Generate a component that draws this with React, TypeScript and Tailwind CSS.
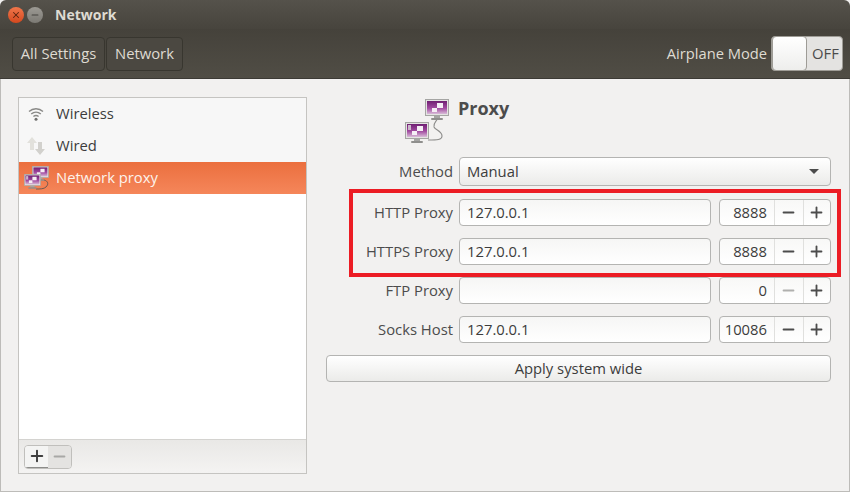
import { Minus, Plus, X } from "lucide-react";

const font = "font-['Open_Sans','Noto_Sans',sans-serif]";

function Screen({ x, y, id, dots, scale = 1 }: { x: number; y: number; id: string; dots?: boolean; scale?: number }) {
  return (
    <g transform={`translate(${x} ${y}) scale(${scale})`}>
      <rect x="0.5" y="0.5" width="23" height="16" fill="#e4e4e2" stroke="#a5a5a3" />
      <rect x="2" y="2" width="20" height="13" fill={`url(#${id})`} />
      <rect x="12" y="4" width="6" height="5" fill="#f5eef5" />
      <rect x="7" y="9" width="5" height="4" fill="#f5eef5" />
      {dots && <rect x="3" y="3" width="3" height="5" fill="#cbb8cb" />}
      <rect x="9" y="17" width="6" height="2" fill="#a5a5a3" />
      <rect x="6" y="19" width="12" height="2" rx="1" fill="#8f8f8d" />
    </g>
  );
}

function Grad({ id }: { id: string }) {
  return (
    <defs>
      <linearGradient id={id} x1="0" y1="0" x2="0" y2="1">
        <stop offset="0" stopColor="#6f1f72" />
        <stop offset="0.55" stopColor="#a14aa0" />
        <stop offset="1" stopColor="#d9bcd8" />
      </linearGradient>
    </defs>
  );
}

function ProxyIcon() {
  return (
    <svg width="48" height="48" viewBox="0 0 48 48" className="shrink-0">
      <Grad id="proxy-large" />
      <path
        d="M35 21 C33 25 30 26 31 30 C32 33 39 34 39 39 C39 43 34 43 25 43"
        fill="none"
        stroke="#8c8c8a"
        strokeWidth="1.1"
      />
      <Screen x={22} y={2} id="proxy-large" />
      <Screen x={2} y={25} id="proxy-large" dots />
    </svg>
  );
}

// the list icon is not the big one scaled: the two monitors overlap
function ProxyIconSmall() {
  return (
    <svg width="25" height="25" viewBox="0 0 25 25" className="shrink-0">
      <Grad id="proxy-small" />
      <path d="M20 14 C24 15 25 18 22 21 C20 23 16 23 12 23" fill="none" stroke="#6d5a52" strokeWidth="1" />
      <Screen x={8} y={0} id="proxy-small" scale={0.7} />
      <Screen x={0} y={8} id="proxy-small" scale={0.7} dots />
    </svg>
  );
}

function WifiIcon() {
  return (
    <svg width="16" height="16" viewBox="0 0 16 16" fill="none" stroke="#8a8a88" className="shrink-0">
      <path d="M1 5.5 C5 1.8 11 1.8 15 5.5" strokeWidth="1.4" />
      <path d="M3.2 8 C6 5.6 10 5.6 12.8 8" strokeWidth="1.4" />
      <path d="M5.4 10.5 C7 9.2 9 9.2 10.6 10.5" strokeWidth="1.4" />
      <circle cx="8" cy="13.3" r="1.5" fill="#6f6f6d" stroke="none" />
    </svg>
  );
}

function WiredIcon() {
  return (
    <svg width="20" height="20" viewBox="0 0 20 20" className="shrink-0">
      <path d="M6 1 L11 7 H8 V14 H4 V7 H1 Z" fill="#e2e1dc" />
      <path d="M14 19 L19 13 H16 V6 H12 V13 H9 Z" fill="#d2d1cd" />
    </svg>
  );
}

function ListRow({ icon, label, active }: { icon: React.ReactNode; label: string; active?: boolean }) {
  return (
    <div
      className={`flex h-8 items-center text-[14.8px] ${
        active ? "bg-gradient-to-b from-[#eb6f3e] to-[#f5865a] text-[#fdf3ec]" : "text-[#3c3c3c]"
      }`}
    >
      <div className="flex w-[37px] justify-center pr-[3px]">{icon}</div>
      <span className="pb-[2px]">{label}</span>
    </div>
  );
}

function FieldRow({ label, children }: { label: string; children: React.ReactNode }) {
  return (
    <div className="flex items-center">
      <div className="w-[127px] text-right text-[14.8px] text-[#4c4c4c]">{label}</div>
      <div className="ml-[6px] flex flex-1 gap-2">{children}</div>
    </div>
  );
}

function TextEntry({ value }: { value: string }) {
  return (
    <div className="flex h-[27px] w-[252px] items-center rounded-[4px] border border-[#b4b4b2] bg-gradient-to-b from-[#f6f6f5] to-white pl-[7px] text-[14.8px] text-[#3c3c3c]">
      {value}
    </div>
  );
}

function Spinner({ value, minusOff }: { value: string; minusOff?: boolean }) {
  return (
    <div className="flex h-[27px] w-[112px] items-stretch rounded-[4px] border border-[#b4b4b2] bg-gradient-to-b from-[#f8f8f7] to-white text-[14.8px] text-[#3c3c3c]">
      <div className="flex w-[54px] items-center justify-end pr-[7px]">{value}</div>
      <div className="flex w-[29px] items-center justify-center border-l border-[#e0e0de] pr-[2px]">
        <Minus size={17} strokeWidth={2.6} color={minusOff ? "#b0b0ae" : "#4c4c4c"} />
      </div>
      <div className="flex w-[27px] items-center justify-center border-l border-[#e0e0de] pr-[1px]">
        <Plus size={17} strokeWidth={2.6} color="#4c4c4c" />
      </div>
    </div>
  );
}

export default function App() {
  return (
    <div className={`relative flex h-[492px] w-[850px] flex-col overflow-hidden bg-[#f2f1f0] ${font}`}>
      {/* title bar */}
      <div className="flex h-[29px] items-center rounded-t-[6px] bg-gradient-to-b from-[#55524b] to-[#47443d] pl-2">
        <div className="flex h-4 w-4 items-center justify-center rounded-full bg-gradient-to-b from-[#f0764a] to-[#d4481d]">
          <X size={10} strokeWidth={2.5} color="#5a2410" />
        </div>
        <div className="ml-[3px] flex h-4 w-4 items-center justify-center rounded-full bg-gradient-to-b from-[#9c9a94] to-[#7c7a74]">
          <Minus size={10} strokeWidth={2.5} color="#45433e" />
        </div>
        <span className="ml-3 text-[14px] font-bold text-[#dfdbd2]">Network</span>
      </div>

      {/* toolbar */}
      <div className="flex h-[50px] items-center justify-between border-b border-[#3c3a35] bg-gradient-to-b from-[#45423b] to-[#504d45] pl-[12px] pr-[7px]">
        <div className="flex gap-[1px] text-[14.8px] text-[#dfdbd2]">
          <div className="flex h-[34px] w-[93px] items-center justify-center rounded-[4px] border border-[#38362f] bg-[#4b4841]">
            All Settings
          </div>
          <div className="flex h-[34px] w-[77px] items-center justify-center rounded-[4px] border border-[#38362f] bg-[#4b4841]">
            Network
          </div>
        </div>
        <div className="flex items-center">
          <span className="text-[14.7px] text-[#dfdbd2]">Airplane Mode</span>
          <div className="ml-1 flex h-[35px] w-[72px] items-center rounded-[4px] border border-[#9e9c96] bg-[#e4e3e1]">
            <div className="h-[35px] w-[35px] shrink-0 rounded-[4px] border border-[#9e9c96] bg-gradient-to-b from-white to-[#eeeeec]" />
            <span className="ml-[5px] text-[14.8px] text-[#4c4c4c]">OFF</span>
          </div>
        </div>
      </div>

      {/* body */}
      <div className="flex flex-1 border-x border-b border-[#bdbcb9] pb-[17px] pl-[17px] pr-[18px] pt-[18px]">
        <div className="flex w-[289px] flex-col border border-[#c5c4c1] bg-white">
          <div className="flex-1">
            <div className="bg-[#f7f7f7]">
              <ListRow icon={<WifiIcon />} label="Wireless" />
              <ListRow icon={<WiredIcon />} label="Wired" />
            </div>
            <ListRow icon={<ProxyIconSmall />} label="Network proxy" active />
          </div>
          <div className="flex h-[34px] items-center border-t border-[#d4d3d0] bg-gradient-to-b from-[#e9e8e6] to-[#f4f3f2] pl-[5px]">
            <div className="flex h-[24px] w-[48px] overflow-hidden rounded-[4px] border border-[#c0bfbc]">
              <div className="flex w-6 items-center justify-center border-b border-[#8c8c8a] bg-[#f4f4f3]">
                <Plus size={18} strokeWidth={2.6} color="#3f3f3f" />
              </div>
              <div className="flex w-6 items-center justify-center bg-[#e4e3e1]">
                <Minus size={17} strokeWidth={2.6} color="#a8a8a6" />
              </div>
            </div>
          </div>
        </div>

        <div className="ml-[19px] flex flex-1 flex-col">
          <div className="flex h-[60px] items-start pl-[77px]">
            <ProxyIcon />
            <span className="ml-[7px] text-[18px] font-bold leading-[22px] text-[#4c4c4c]">Proxy</span>
          </div>
          <div className="flex flex-col gap-3">
            <div className="mb-[1px]">
              <FieldRow label="Method">
                <div className="flex h-[29px] w-[372px] items-center justify-between rounded-[4px] border border-[#b4b4b2] bg-gradient-to-b from-white to-[#ebebe9] pl-[7px] pr-[11px] text-[14.8px] text-[#3c3c3c]">
                  Manual
                  <div className="h-0 w-0 border-x-[5px] border-t-[5px] border-x-transparent border-t-[#4c4c4c]" />
                </div>
              </FieldRow>
            </div>
            <FieldRow label="HTTP Proxy">
              <TextEntry value="127.0.0.1" />
              <Spinner value="8888" />
            </FieldRow>
            <FieldRow label="HTTPS Proxy">
              <TextEntry value="127.0.0.1" />
              <Spinner value="8888" />
            </FieldRow>
            <FieldRow label="FTP Proxy">
              <TextEntry value="" />
              <Spinner value="0" minusOff />
            </FieldRow>
            <FieldRow label="Socks Host">
              <TextEntry value="127.0.0.1" />
              <Spinner value="10086" />
            </FieldRow>
            <div className="flex h-[27px] w-[505px] items-center justify-center rounded-[4px] border border-[#b4b4b2] bg-gradient-to-b from-white to-[#ebebe9] text-[14.8px] text-[#3c3c3c]">
              Apply system wide
            </div>
          </div>
        </div>
      </div>

      {/* red annotation */}
      <div className="absolute left-[349px] top-[189px] h-[88px] w-[492px] border-[4px] border-[#ec1c24]" />
    </div>
  );
}
